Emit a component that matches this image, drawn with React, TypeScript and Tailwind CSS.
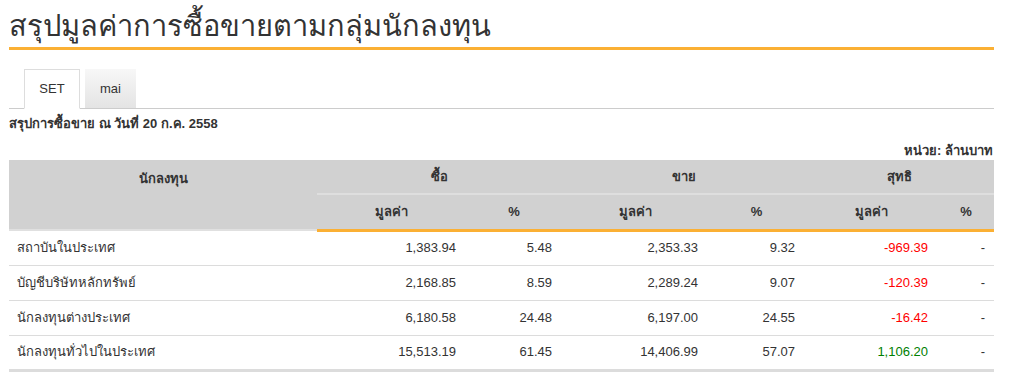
const rows = [
  { name: 'สถาบันในประเทศ', bv: '1,383.94', bp: '5.48', sv: '2,353.33', sp: '9.32', nv: '-969.39', np: '-' },
  { name: 'บัญชีบริษัทหลักทรัพย์', bv: '2,168.85', bp: '8.59', sv: '2,289.24', sp: '9.07', nv: '-120.39', np: '-' },
  { name: 'นักลงทุนต่างประเทศ', bv: '6,180.58', bp: '24.48', sv: '6,197.00', sp: '24.55', nv: '-16.42', np: '-' },
  { name: 'นักลงทุนทั่วไปในประเทศ', bv: '15,513.19', bp: '61.45', sv: '14,406.99', sp: '57.07', nv: '1,106.20', np: '-' },
];

export default function App() {
  return (
    <div className="bg-white w-[1010px] h-[381px] overflow-hidden text-[#333] font-['Liberation_Sans','Noto_Sans',sans-serif]">
      <div className="ml-[9px] w-[985px]">
        <h1 className="pt-[9px] h-[47px] text-[29px] leading-[34px] text-[#333]">สรุปมูลค่าการซื้อขายตามกลุ่มนักลงทุน</h1>
        <div className="h-[3px] bg-[#fbb034]" />

        <div className="mt-[19px] flex items-end gap-[5px] pl-[15px] border-b border-[#ccc] h-[40px]">
          <div className="w-[56px] h-[40px] -mb-px bg-white border border-[#ddd] border-b-white flex items-center justify-center text-[13px]">SET</div>
          <div className="w-[51px] h-[39px] bg-gradient-to-b from-[#f7f7f7] to-[#e4e4e4] flex items-center justify-center text-[13px]">mai</div>
        </div>

        <div className="mt-[6px] text-[13px] font-bold leading-[18px]">สรุปการซื้อขาย ณ วันที่ 20 ก.ค. 2558</div>
        <div className="mt-[9px] text-right text-[13px] font-bold leading-[18px] pr-[1px]">หน่วย: ล้านบาท</div>

        <table className="w-[985px] border-collapse table-fixed text-[13px]">
          <colgroup>
            <col className="w-[308px]" />
            <col className="w-[149px]" />
            <col className="w-[96px]" />
            <col className="w-[146px]" />
            <col className="w-[97px]" />
            <col className="w-[133px]" />
            <col className="w-[56px]" />
          </colgroup>
          <thead className="bg-[#d1d1d1] font-bold">
            <tr className="h-[34px]">
              <th rowSpan={2} className="align-top pt-[9px] font-bold border-b-[2px] border-[#e0e0e0]">นักลงทุน</th>
              <th colSpan={2} className="font-bold border-b-[2px] border-[#dedede]">ซื้อ</th>
              <th colSpan={2} className="font-bold border-b-[2px] border-[#dedede]">ขาย</th>
              <th colSpan={2} className="font-bold border-b-[2px] border-[#dedede]">สุทธิ</th>
            </tr>
            <tr className="h-[36px]">
              <th className="font-bold border-b-[3px] border-[#fbb034]">มูลค่า</th>
              <th className="font-bold border-b-[3px] border-[#fbb034]">%</th>
              <th className="font-bold border-b-[3px] border-[#fbb034]">มูลค่า</th>
              <th className="font-bold border-b-[3px] border-[#fbb034]">%</th>
              <th className="font-bold border-b-[3px] border-[#fbb034]">มูลค่า</th>
              <th className="font-bold border-b-[3px] border-[#fbb034]">%</th>
            </tr>
          </thead>
          <tbody>
            {rows.map((r, i) => (
              <tr key={r.name} className={`h-[35px] ${i === rows.length - 1 ? 'border-b-[3px] border-[#dcdcdc]' : 'border-b border-[#dcdcdc]'}`}>
                <td className="pl-[8px]">{r.name}</td>
                <td className="text-right pr-[10px]">{r.bv}</td>
                <td className="text-right pr-[10px]">{r.bp}</td>
                <td className="text-right pr-[10px]">{r.sv}</td>
                <td className="text-right pr-[10px]">{r.sp}</td>
                <td className={`text-right pr-[10px] ${r.nv.startsWith('-') ? 'text-[#ff0000]' : 'text-[#008000]'}`}>{r.nv}</td>
                <td className="text-right pr-[9px]">{r.np}</td>
              </tr>
            ))}
          </tbody>
        </table>
      </div>
    </div>
  );
}
